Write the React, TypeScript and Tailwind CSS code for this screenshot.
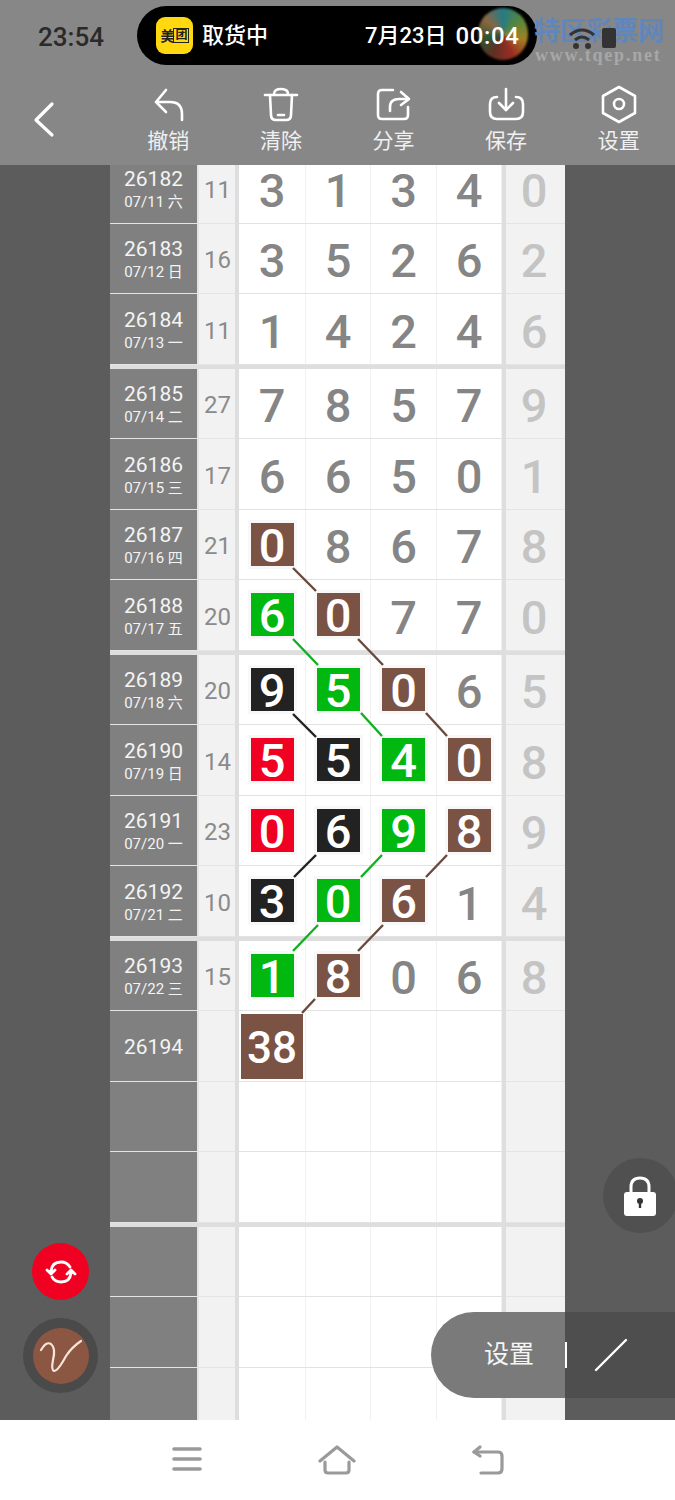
import React from "react";

type Tone = "b" | "g" | "k" | "r" | "";
type Cell = [string, Tone];
type Row = { id?: string; date?: string; sum?: string; cells?: Cell[]; last?: string; big?: boolean; top?: boolean };

const p = (s: string): Cell[] =>
  s.split(" ").map((t) => [t[0], (t[1] || "") as Tone]);

const groups: Row[][] = [
  [
    { id: "26182", date: "07/11 六", sum: "11", cells: p("3 1 3 4"), last: "0", top: true },
    { id: "26183", date: "07/12 日", sum: "16", cells: p("3 5 2 6"), last: "2" },
    { id: "26184", date: "07/13 一", sum: "11", cells: p("1 4 2 4"), last: "6" },
  ],
  [
    { id: "26185", date: "07/14 二", sum: "27", cells: p("7 8 5 7"), last: "9" },
    { id: "26186", date: "07/15 三", sum: "17", cells: p("6 6 5 0"), last: "1" },
    { id: "26187", date: "07/16 四", sum: "21", cells: p("0b 8 6 7"), last: "8" },
    { id: "26188", date: "07/17 五", sum: "20", cells: p("6g 0b 7 7"), last: "0" },
  ],
  [
    { id: "26189", date: "07/18 六", sum: "20", cells: p("9k 5g 0b 6"), last: "5" },
    { id: "26190", date: "07/19 日", sum: "14", cells: p("5r 5k 4g 0b"), last: "8" },
    { id: "26191", date: "07/20 一", sum: "23", cells: p("0r 6k 9g 8b"), last: "9" },
    { id: "26192", date: "07/21 二", sum: "10", cells: p("3k 0g 6b 1"), last: "4" },
  ],
  [
    { id: "26193", date: "07/22 三", sum: "15", cells: p("1g 8b 0 6"), last: "8" },
    { id: "26194", big: true },
    {},
    {},
  ],
  [{}, {}, {}],
];

const toneClass: Record<string, string> = {
  b: "bg-[#7b5344]",
  g: "bg-[#00b80f]",
  k: "bg-[#222222]",
  r: "bg-[#f00021]",
};

const colW = ["w-[67px]", "w-[65px]", "w-[66px]", "w-[65px]"];

function GridRow({ row }: { row: Row }) {
  const lift = row.top ? "pb-[12px]" : "";
  return (
    <div className={`flex ${row.top ? "h-[58.5px]" : "h-[70.5px]"}`}>
      <div className={`flex w-[87px] flex-col items-center justify-center border-b border-[#e4e4e4] bg-[#808080] pt-[3px] text-[#f4f4f4] ${lift}`}>
        {row.id && <div className="text-[21px] leading-[26px]">{row.id}</div>}
        {row.date && <div className="text-[15px] leading-[21px]">{row.date}</div>}
      </div>
      <div className={`flex w-[38px] items-center justify-center border-b border-l-2 border-[#e4e4e4] bg-[#f2f2f2] pl-[1px] pt-[4px] text-[24px] text-[#8a8a8a] ${lift}`}>
        {row.sum}
      </div>
      <div className="w-[4px] bg-[#dedede]" />
      <div className="flex border-b border-[#e2e2e2] bg-white">
        {[0, 1, 2, 3].map((i) => {
          const c = row.cells?.[i];
          return (
            <div
              key={i}
              className={`${colW[i]} flex items-center justify-center border-r border-[#f1f1f1] text-[47px] font-[480] leading-none text-[#858585] ${lift}`}
            >
              {row.big && i === 0 ? (
                <div className="mt-[2px] flex h-[65px] w-[62px] items-center justify-center bg-[#7b5344] pt-[2px] text-[44px] text-white">
                  38
                </div>
              ) : c && c[1] ? (
                <div
                  className={`${toneClass[c[1]]} flex h-[43px] w-[43px] items-center justify-center pt-[2px] text-white ring-[3px] ring-[#f8f8f8]`}
                >
                  {c[0]}
                </div>
              ) : (
                <span className="mt-[5px]">{c?.[0]}</span>
              )}
            </div>
          );
        })}
      </div>
      <div className="w-[4px] bg-[#dedede]" />
      <div className={`flex w-[59px] items-center justify-center border-b border-[#e4e4e4] bg-[#f2f2f2] pr-[3px] pt-[5px] text-[47px] font-[480] leading-none text-[#c4c4c4] ${lift}`}>
        {row.last}
      </div>
    </div>
  );
}

const tools = [
  {
    label: "撤销",
    icon: (
      <>
        <path d="M18 6 L8 18 L18 28" />
        <path d="M9 18 H22 Q34 18 34 30 V36" />
      </>
    ),
  },
  {
    label: "清除",
    icon: (
      <>
        <path d="M4 11 H36" />
        <path d="M13 10 Q13 5 20 5 Q27 5 27 10" />
        <path d="M9 11 L10 31 Q10 36 15 36 H25 Q30 36 30 31 L31 11" />
        <path d="M17 31 H23" />
      </>
    ),
  },
  {
    label: "分享",
    icon: (
      <>
        <path d="M20 6 H9 Q5 6 5 10 V31 Q5 35 9 35 H31 Q35 35 35 31 V23" />
        <path d="M17 27 V23 Q17 15 26 15 H35" />
        <path d="M28 8 L36 15 L28 21" />
      </>
    ),
  },
  {
    label: "保存",
    icon: (
      <>
        <path d="M11 13 Q4 13 4 20 V28 Q4 35 11 35 H30 Q37 35 37 28 V20 Q37 13 30 13" />
        <path d="M20 5 V26" />
        <path d="M13 19 L20 26 L27 19" />
      </>
    ),
  },
  {
    label: "设置",
    icon: (
      <>
        <path d="M20 3 L36 12 V29 L20 38 L4 29 V12 Z" />
        <circle cx="20" cy="20" r="5" />
      </>
    ),
  },
];

const links: [number, number, number, number, string][] = [
  [293, 568, 316, 591, "#6a4a3e"],
  [293, 639, 318, 665, "#10b020"],
  [358, 639, 383, 665, "#6a4a3e"],
  [293, 714, 316, 737, "#222222"],
  [361, 713, 382, 736, "#10b020"],
  [426, 713, 447, 736, "#6a4a3e"],
  [316, 855, 294, 877, "#222222"],
  [382, 855, 361, 877, "#10b020"],
  [447, 855, 426, 877, "#6a4a3e"],
  [318, 925, 293, 951, "#10b020"],
  [383, 925, 358, 951, "#6a4a3e"],
  [315, 999, 302, 1013, "#6a4a3e"],
];

export default function App() {
  return (
    <div className="relative flex h-[1500px] w-[675px] flex-col overflow-hidden bg-white font-['Roboto','Noto_Sans_CJK_SC',sans-serif]">
      <header className="h-[165px] shrink-0 bg-[#878787]">
        <div className="flex h-[72px] items-start">
          <div className="ml-[38px] mt-[22px] w-[99px] text-[26px] font-medium leading-[30px] text-[#2a2a2a]">23:54</div>
          <div className="relative mt-[6px] flex h-[59px] w-[400px] items-center rounded-full bg-black pl-[19px] text-white">
            <div className="absolute left-[341px] top-[2px] h-[52px] w-[50px] rounded-full bg-[conic-gradient(#2f9aa8,#6ea84a,#c9a030,#c0392b,#7a3b2e,#3a6a40,#b08050,#2f9aa8)] opacity-80 blur-[1px]" />
            <div className="flex h-[37px] w-[37px] items-center justify-center rounded-[9px] bg-[#ffd80f] text-[14px] font-bold leading-none tracking-[-1px] text-[#222]">
              美<span className="border border-[#222] px-[1px] text-[12px] leading-[13px]">团</span>
            </div>
            <div className="ml-[9px] text-[22px] font-medium">取货中</div>
            <div className="relative ml-[97px] flex items-center text-[22px] font-medium">
              <span>7月23日</span>
              <span className="ml-[9px] text-[24px] tracking-[0.6px]">00:04</span>
            </div>
          </div>
        </div>
        <div className="flex h-[93px] items-start">
          <div className="w-[112px] pl-[28px] pt-[26px]">
            <svg width="32" height="44" viewBox="0 0 32 44" fill="none" stroke="#ffffff" strokeWidth="3.2" strokeLinecap="round" strokeLinejoin="round">
              <path d="M24 6 L8 22 L24 37" />
            </svg>
          </div>
          <div className="grid flex-1 grid-cols-5 pt-[12px]">
            {tools.map((t) => (
              <div key={t.label} className="flex flex-col items-center">
                <svg width="40" height="40" viewBox="0 0 40 40" fill="none" stroke="#ffffff" strokeWidth="2.6" strokeLinecap="round" strokeLinejoin="round">
                  {t.icon}
                </svg>
                <div className="mt-[5px] text-[21px] leading-[24px] text-[#f0f0f0]">{t.label}</div>
              </div>
            ))}
          </div>
        </div>
      </header>

      <main className="flex h-[1255px] shrink-0 justify-center overflow-hidden bg-[#5c5c5c]">
        <div className="h-fit w-[455px] shrink-0">
          {groups.map((g, gi) => (
            <div key={gi}>
              {g.map((r, ri) => (
                <GridRow key={ri} row={r} />
              ))}
              <div className="h-[4px] bg-[#dedede]" />
            </div>
          ))}
        </div>
      </main>

      <nav className="flex h-[80px] shrink-0 items-center bg-white">
        <div className="grid w-full grid-cols-3 px-[112px]">
          <div className="flex justify-center">
            <svg width="32" height="28" viewBox="0 0 32 28" fill="none" stroke="#9a9a9a" strokeWidth="3.6" strokeLinecap="round">
              <path d="M3 4 H29 M3 14 H29 M3 24 H29" />
            </svg>
          </div>
          <div className="flex justify-center">
            <svg width="38" height="30" viewBox="0 0 38 30" fill="none" stroke="#9a9a9a" strokeWidth="3.2" strokeLinecap="round" strokeLinejoin="round">
              <path d="M2 16 L19 2 L36 16" />
              <path d="M7 17 V25 Q7 28 10 28 H28 Q31 28 31 25 V17" />
            </svg>
          </div>
          <div className="flex justify-center">
            <svg width="34" height="30" viewBox="0 0 34 30" fill="none" stroke="#9a9a9a" strokeWidth="3.2" strokeLinecap="round" strokeLinejoin="round">
              <path d="M3 7 H27 Q31 7 31 11 V24 Q31 28 27 28 H10" />
              <path d="M9 2 L3 7 L9 11" />
            </svg>
          </div>
        </div>
      </nav>

      {/* connecting lines over the grid */}
      <svg className="pointer-events-none absolute left-0 top-0" width="675" height="1500" fill="none" strokeWidth="2.4">
        {links.map(([a, b, c, d, s], i) => (
          <line key={i} x1={a} y1={b} x2={c} y2={d} stroke={s} />
        ))}
      </svg>

      {/* watermark and status icons */}
      <div className="absolute left-[534px] top-[15px] text-[26px] font-bold leading-[32px] text-[#5f86bd]">特区彩票网</div>
      <div className="absolute left-[535px] top-[45px] font-['Liberation_Serif',serif] text-[18px] font-bold leading-[20px] tracking-[1.8px] text-[#a8a8a8]">www.tqep.net</div>
      <svg className="absolute left-[568px] top-[26px]" width="50" height="24" viewBox="0 0 50 24" fill="none" stroke="#333333" strokeWidth="3">
        <path d="M2 9 Q14 -1 26 9" />
        <path d="M7 14 Q14 8 21 14" />
        <circle cx="8" cy="20" r="1.5" fill="#333333" />
        <circle cx="20" cy="20" r="1.5" fill="#333333" />
        <rect x="34" y="2" width="14" height="20" rx="2" fill="#333333" stroke="none" />
      </svg>

      {/* floating controls */}
      <div className="absolute left-[32px] top-[1243px] flex h-[57px] w-[57px] items-center justify-center rounded-full bg-[#f00021]">
        <svg width="32" height="32" viewBox="0 0 32 32" fill="none" stroke="#ffffff" strokeWidth="2.8" strokeLinecap="round" strokeLinejoin="round">
          <path d="M6 15 Q7 6 16 6 Q22 6 25 11" />
          <path d="M26 17 Q25 26 16 26 Q10 26 7 21" />
          <path d="M2 14 L6 18 L10 14" fill="#ffffff" />
          <path d="M22 18 L26 14 L30 18" fill="#ffffff" />
        </svg>
      </div>
      <div className="absolute left-[23px] top-[1318px] flex h-[75px] w-[75px] items-center justify-center rounded-full bg-[#4a4a4a]">
        <div className="flex h-[56px] w-[56px] items-center justify-center rounded-full bg-[#8b5742]">
          <svg width="46" height="40" viewBox="0 0 46 40" fill="none" stroke="#f8e4d8" strokeWidth="2.2" strokeLinecap="round" strokeLinejoin="round">
            <path d="M3 14 Q8 5 13 8 Q18 12 15 24 Q13 34 16 35 Q20 35 28 20 Q34 11 43 5" />
          </svg>
        </div>
      </div>
      <div className="absolute left-[603px] top-[1158px] flex h-[75px] w-[75px] items-center justify-center rounded-full bg-[#505050]">
        <svg width="34" height="42" viewBox="0 0 34 42" className="mr-[2px]">
          <path d="M8 18 V12 Q8 3 17 3 Q26 3 26 12 V18" fill="none" stroke="#ffffff" strokeWidth="3" />
          <rect x="1" y="17" width="32" height="24" rx="3" fill="#ffffff" />
          <circle cx="17" cy="26" r="3" fill="#333333" />
          <rect x="15.8" y="26" width="2.4" height="7" fill="#333333" />
        </svg>
      </div>
      <div className="absolute left-[431px] top-[1312px] flex h-[86px] w-[244px]">
        <div className="flex w-[134px] items-center rounded-l-full bg-[#7a7a7a] pl-[53px]">
          <span className="text-[25px] text-[#f5f5f5]">设置</span>
        </div>
        <div className="flex w-[110px] items-center bg-[#4e4e4e]">
          <div className="h-[26px] w-[2px] bg-white" />
          <svg className="ml-[26px]" width="36" height="36" viewBox="0 0 36 36" fill="none" stroke="#ffffff" strokeWidth="2.4" strokeLinecap="round">
            <path d="M3 33 L33 3" />
          </svg>
        </div>
      </div>
    </div>
  );
}
